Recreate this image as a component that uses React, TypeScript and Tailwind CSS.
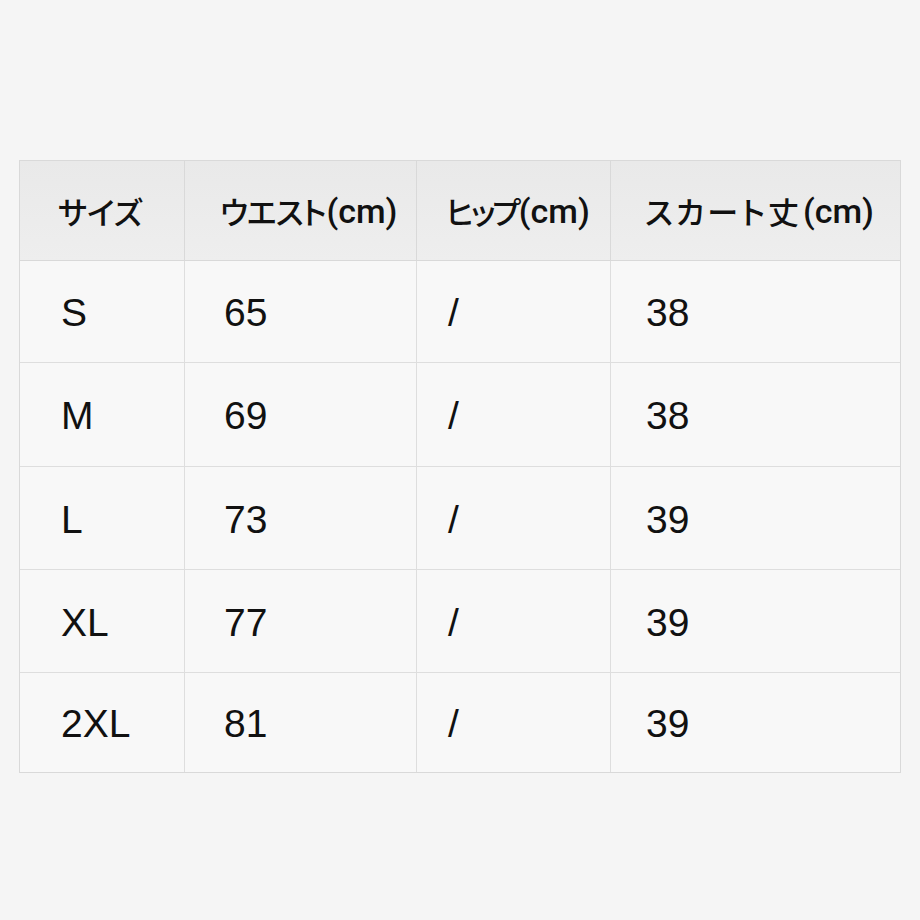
const headers: { jp: string; unit: string; track: string }[] = [
  { jp: "サイズ", unit: "", track: "tracking-[0px]" },
  { jp: "ウエスト", unit: "(cm)", track: "tracking-[-1px]" },
  { jp: "ヒップ", unit: "(cm)", track: "tracking-[-3px]" },
  { jp: "スカート丈", unit: "(cm)", track: "tracking-[3px]" },
];

const rows = [
  ["S", "65", "/", "38"],
  ["M", "69", "/", "38"],
  ["L", "73", "/", "39"],
  ["XL", "77", "/", "39"],
  ["2XL", "81", "/", "39"],
];

const colWidths = ["w-[165px]", "w-[232px]", "w-[194px]", "w-[290px]"];
const headPad = ["pl-[38px]", "pl-[35px]", "pl-[29px]", "pl-[34px]"];
const cellPad = ["pl-[41px]", "pl-[39px]", "pl-[31px]", "pl-[35px]"];
const rowHeights = ["h-[102px]", "h-[104px]", "h-[103px]", "h-[103px]", "h-[99px]"];

export default function App() {
  return (
    <div className="w-[920px] h-[920px] bg-[#f5f5f5] pt-[160px] pl-[19px]">
      <div className="w-[882px] border border-[#d9d9d9] bg-[#f8f8f8]">
        {/* Header */}
        <div className="flex h-[100px] bg-gradient-to-b from-[#e9e9e9] to-[#eeeeee] border-b border-[#d9d9d9]">
          {headers.map((h, i) => (
            <div
              key={h.jp}
              className={`${colWidths[i]} ${headPad[i]} flex items-center shrink-0 pt-[2px] ${i < 3 ? "border-r border-[#d9d9d9]" : ""}`}
            >
              <span className={`font-['Noto_Sans_CJK_JP',sans-serif] text-[31px] font-medium text-[#111] [font-feature-settings:'palt'] ${h.track}`}>
                {h.jp}
              </span>
              {h.unit && (
                <span className="font-['Roboto',sans-serif] text-[34px] font-medium text-[#111] ml-[1px]">
                  {h.unit}
                </span>
              )}
            </div>
          ))}
        </div>

        {/* Body */}
        {rows.map((r, ri) => (
          <div
            key={r[0]}
            className={`flex ${rowHeights[ri]} ${ri < rows.length - 1 ? "border-b border-[#dedede]" : ""}`}
          >
            {r.map((c, i) => (
              <div
                key={i}
                className={`${colWidths[i]} ${cellPad[i]} flex items-center shrink-0 pt-[4px] ${i < 3 ? "border-r border-[#dedede]" : ""}`}
              >
                <span className="font-['Liberation_Sans',Arial,sans-serif] text-[39px] text-[#111]">
                  {c}
                </span>
              </div>
            ))}
          </div>
        ))}
      </div>
    </div>
  );
}
